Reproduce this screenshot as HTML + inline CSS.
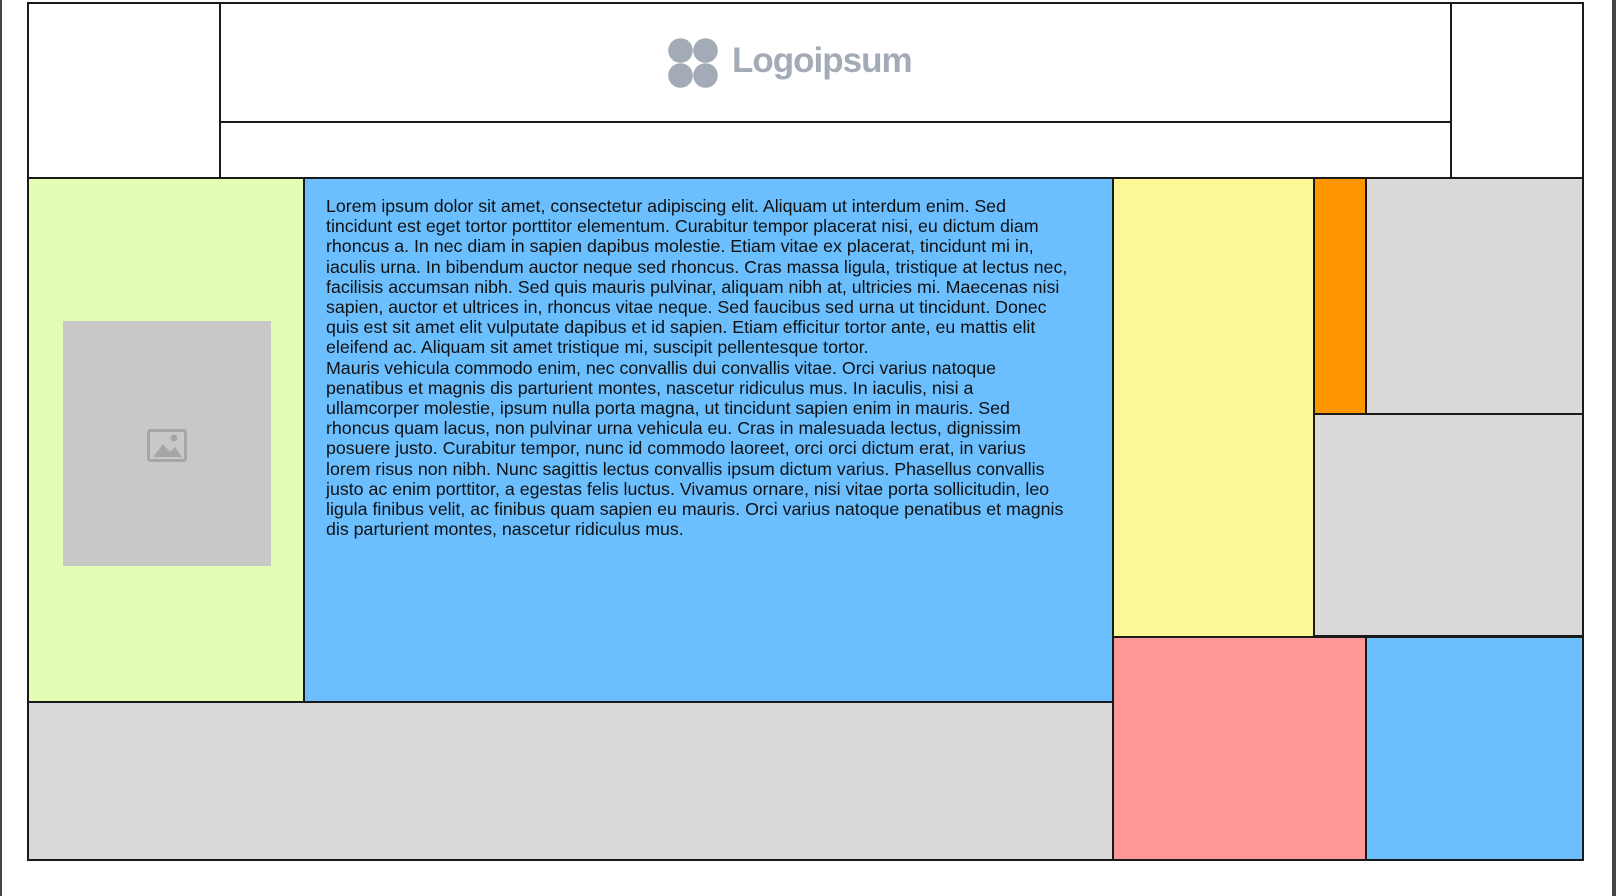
<!DOCTYPE html>
<html><head><meta charset="utf-8"><style>
html,body{margin:0;padding:0;width:1616px;height:896px;overflow:hidden;background:#fff;position:relative}
.b{position:absolute;box-sizing:border-box;border:2px solid #1a1a1a}
.t{position:absolute;left:326px;top:196px;width:780px;font-family:"Liberation Sans",sans-serif;font-size:17.8px;line-height:20.2px;color:#111;white-space:nowrap}
</style></head><body>
<div style="position:absolute;left:0;top:0;width:2px;height:896px;background:#444"></div>
<div style="position:absolute;left:1612px;top:0;width:4px;height:896px;background:#444"></div>
<div class="b" style="left:27px;top:2px;width:1557px;height:177px"></div>
<div class="b" style="left:219px;top:2px;width:1233px;height:121px"></div>
<div class="b" style="left:219px;top:121px;width:1233px;height:58px"></div>
<div class="b" style="left:27px;top:177px;width:279px;height:526px;background:#e3fdb5"></div>
<div class="b" style="left:303px;top:177px;width:811px;height:526px;background:#6bbfff"></div>
<div class="b" style="left:27px;top:701px;width:1087px;height:160px;background:#d9d9d9"></div>
<div class="b" style="left:1112px;top:177px;width:204px;height:461px;background:#fdf898"></div>
<div class="b" style="left:1313px;top:177px;width:55px;height:238px;background:#ff9800"></div>
<div class="b" style="left:1365px;top:177px;width:219px;height:238px;background:#d9d9d9"></div>
<div class="b" style="left:1313px;top:413px;width:271px;height:224px;background:#d9d9d9"></div>
<div class="b" style="left:1112px;top:636px;width:256px;height:225px;background:#ff9999"></div>
<div class="b" style="left:1365px;top:636px;width:219px;height:225px;background:#6bbfff"></div>
<div style="position:absolute;left:63px;top:321px;width:208px;height:245px;background:#c8c8c8"></div>
<svg style="position:absolute;left:145px;top:427px" width="44" height="37" viewBox="0 0 44 37"><rect x="3.5" y="3.5" width="37" height="30" rx="2" fill="none" stroke="#a6a6a6" stroke-width="3"/><circle cx="29" cy="11" r="3.5" fill="#a6a6a6"/><path d="M8 30 L18 17 L25 25 L30 20 L37 30 Z" fill="#a6a6a6"/></svg>
<svg style="position:absolute;left:668px;top:38px" width="50" height="50" viewBox="0 0 50 50"><g fill="#a3abb7"><circle cx="12.5" cy="12.5" r="12.3"/><circle cx="37.5" cy="12.5" r="12.3"/><circle cx="12.5" cy="37.5" r="12.3"/><circle cx="37.5" cy="37.5" r="12.3"/></g></svg>
<div style="position:absolute;left:732px;top:36px;font-family:'Liberation Sans',sans-serif;font-weight:bold;font-size:35px;letter-spacing:-1px;color:#a3abb7;line-height:50px">Logoipsum</div>
<div class="t">Lorem ipsum dolor sit amet, consectetur adipiscing elit. Aliquam ut interdum enim. Sed<br>tincidunt est eget tortor porttitor elementum. Curabitur tempor placerat nisi, eu dictum diam<br>rhoncus a. In nec diam in sapien dapibus molestie. Etiam vitae ex placerat, tincidunt mi in,<br>iaculis urna. In bibendum auctor neque sed rhoncus. Cras massa ligula, tristique at lectus nec,<br>facilisis accumsan nibh. Sed quis mauris pulvinar, aliquam nibh at, ultricies mi. Maecenas nisi<br>sapien, auctor et ultrices in, rhoncus vitae neque. Sed faucibus sed urna ut tincidunt. Donec<br>quis est sit amet elit vulputate dapibus et id sapien. Etiam efficitur tortor ante, eu mattis elit<br>eleifend ac. Aliquam sit amet tristique mi, suscipit pellentesque tortor.<br>Mauris vehicula commodo enim, nec convallis dui convallis vitae. Orci varius natoque<br>penatibus et magnis dis parturient montes, nascetur ridiculus mus. In iaculis, nisi a<br>ullamcorper molestie, ipsum nulla porta magna, ut tincidunt sapien enim in mauris. Sed<br>rhoncus quam lacus, non pulvinar urna vehicula eu. Cras in malesuada lectus, dignissim<br>posuere justo. Curabitur tempor, nunc id commodo laoreet, orci orci dictum erat, in varius<br>lorem risus non nibh. Nunc sagittis lectus convallis ipsum dictum varius. Phasellus convallis<br>justo ac enim porttitor, a egestas felis luctus. Vivamus ornare, nisi vitae porta sollicitudin, leo<br>ligula finibus velit, ac finibus quam sapien eu mauris. Orci varius natoque penatibus et magnis<br>dis parturient montes, nascetur ridiculus mus.</div>
</body></html>
